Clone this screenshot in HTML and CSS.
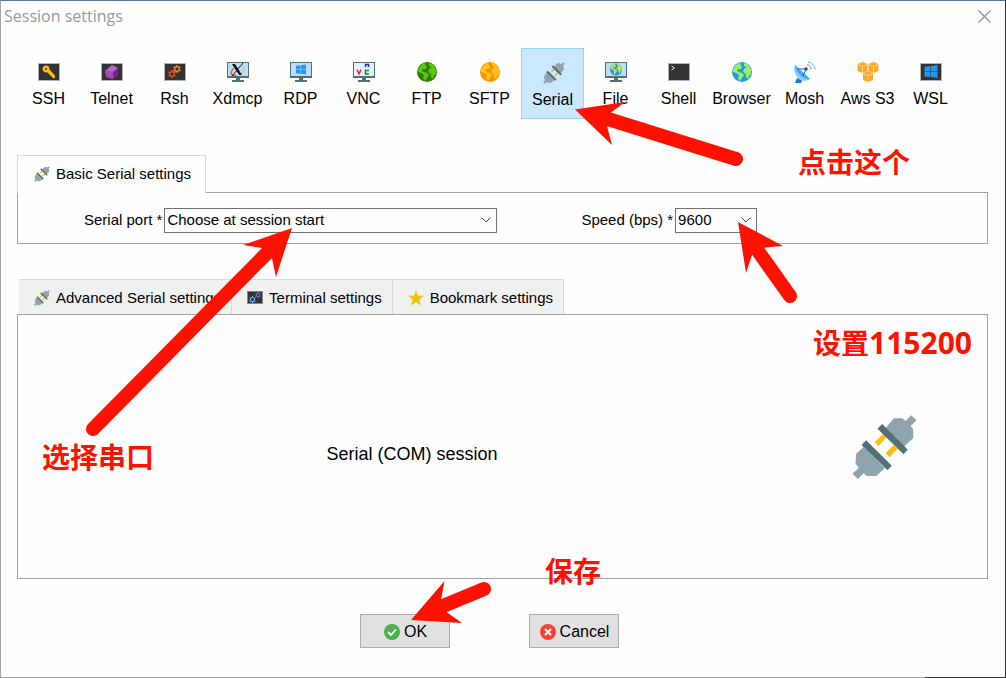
FILE: index.html
```html
<!DOCTYPE html>
<html lang="en">
<head>
<meta charset="utf-8">
<title>Session settings</title>
<link rel="stylesheet" href="styles.css">
</head>
<body>
<svg class="symbols" aria-hidden="true">
  <symbol id="plug" viewBox="38 44 194 192">
    <path fill="#90a4ae" d="M138 84 163 54H188L198 62 215 45 231 60 213 77 221 86V113L190 142ZM72 140 50 160 48 190 58 202 39 220 55 236 72 219 82 227H110L136 204Z"/>
    <path fill="#ffc107" d="M131 101 141 111 117 137 105 125ZM163 134 174 145 150 171 138 159Z"/>
    <path fill="#546e7a" d="M128 71 205 148 192 162 114 85ZM80 120 157 196 144 210 66 134Z"/>
  </symbol>
  <symbol id="terminal" viewBox="0 0 23 24">
    <path fill="#b0b0b0" d="M1 3h22v18H1z"/><path fill="#333" d="M2 4h20v16H2z"/>
  </symbol>
  <symbol id="monitor" viewBox="0 0 23 24">
    <path fill="#546e7a" d="M1 2h22v16h-9v2h4v2H6v-2h4v-2H1z"/><path fill="#bbdefb" d="M2 3h20v13H2z"/>
  </symbol>
  <symbol id="land" viewBox="0 0 20 20">
    <path d="M7 1 4 3 1 7l0 3 3 1 3 2-1 3 2 3 2-3 2-3-2-2-3-1-2-1 1-2 3 0 1-3-2-1 1-1ZM12 1l3 1 2 2 2 4 0 4-2 2-1 3-2-2v-3l-2-1-1-2 2-3 2-1-3-1Z"/>
  </symbol>
  <symbol id="windows" viewBox="0 0 12 12">
    <path fill="#2196f3" d="M0 1.500 5.500 1V5.700H0ZM6 .900 12 0V5.700H6ZM0 6.300H5.500V11L0 10.500ZM6 6.300H12V12L6 11.100Z"/>
  </symbol>
  <symbol id="gear" viewBox="-5 -5 10 10">
    <circle r="3" fill="none" stroke="currentColor" stroke-width="1.5"/>
    <path stroke="currentColor" stroke-width="1.4" d="M0-5v2M0 3v2M-4.4-2.5l1.8 1M2.6 1.5l1.8 1M-4.4 2.5l1.8-1M2.6-1.5l1.8-1"/>
  </symbol>
  <symbol id="cube" viewBox="0 0 11 11">
    <path fill="#ffa726" d="m5.500 0 5 2v7l-5 2-5-2V2z"/><path d="m.5 2.500 5 2 5-2M5.500 4.500V11" fill="none" stroke="#ffe0b2" stroke-width=".8"/>
  </symbol>
</svg>

<main class="dialog">
  <header class="titlebar">
    <h1 class="title">Session settings</h1>
    <button class="close" type="button" aria-label="Close">
      <svg class="close-icon" viewBox="0 0 13 13"><path d="M.5.5l12 12M12.5.5l-12 12" fill="none" stroke="#888" stroke-width="1.1"/></svg>
    </button>
  </header>

  <nav class="toolbar" aria-label="Session type">
    <button class="tool" type="button"><svg class="tool-icon" viewBox="0 0 23 24"><use href="#terminal"/><circle cx="9" cy="9" r="2.200" fill="none" stroke="#ffc107" stroke-width="2.400"/><path d="m9 11 7 7h2v-2.500L12 9" fill="#ffc107"/></svg>SSH</button>
    <button class="tool" type="button"><svg class="tool-icon" viewBox="0 0 23 24"><use href="#terminal"/><path fill="#9c27b0" d="m12 5 6 3v7l-5 4-7-2-1-6z"/><path fill="#ba68c8" d="m12 5 6 3-5 4-8-1z"/><path fill="#ab47bc" d="m5 11 8 1 0 7-7-2z"/><path fill="#7b1fa2" d="m18 8v7l-5 4v-7z"/></svg>Telnet</button>
    <button class="tool" type="button"><svg class="tool-icon" viewBox="0 0 23 24"><use href="#terminal"/><use href="#gear" class="orange" x="10" y="5" width="8" height="8"/><use href="#gear" class="rust" x="5" y="10" width="8" height="8"/></svg>Rsh</button>
    <button class="tool" type="button"><svg class="tool-icon" viewBox="0 0 23 24"><use href="#monitor"/><path d="M8 8c-5 5-3 8 2 7" fill="none" stroke="#ff5722" stroke-width="1.600"/><path d="M16 5c4 3 2 8-3 10" fill="none" stroke="#ffb380" stroke-width="1.200"/><path fill="#111" d="M6 4h3l7 11h-3z"/><path d="M17 3 6 16" stroke="#111"/></svg>Xdmcp</button>
    <button class="tool" type="button"><svg class="tool-icon" viewBox="0 0 23 24"><use href="#monitor"/><use href="#windows" x="7" y="4" width="10" height="11"/></svg>RDP</button>
    <button class="tool" type="button"><svg class="tool-icon" viewBox="0 0 23 24"><use href="#monitor"/><path fill="#e3f2fd" d="M2 3h20v13H2z"/><path d="m5 9.500 2 4.500 2-4.500" fill="none" stroke="#f02020" stroke-width="1.500"/><path d="M13.500 7V4.500h3V7" fill="none" stroke="#2020e8" stroke-width="1.400"/><path d="M17 10.500h-3.500v3.500H17" fill="none" stroke="#00902c" stroke-width="1.500"/></svg>VNC</button>
    <button class="tool" type="button"><svg class="tool-icon" viewBox="0 0 23 24"><circle cx="12" cy="12" r="10" fill="#2e7d00"/><use href="#land" x="2" y="2" width="20" height="20" fill="#5ac70c"/></svg>FTP</button>
    <button class="tool" type="button"><svg class="tool-icon" viewBox="0 0 23 24"><circle cx="12" cy="12" r="10" fill="#ff8f00"/><use href="#land" x="2" y="2" width="20" height="20" fill="#ffc61a"/></svg>SFTP</button>
    <button class="tool selected" type="button" aria-pressed="true"><svg class="tool-icon" viewBox="0 0 23 24"><use href="#plug" x="2" y="1" width="22" height="22"/></svg>Serial</button>
    <button class="tool" type="button"><svg class="tool-icon" viewBox="0 0 23 24"><use href="#monitor"/><circle cx="12" cy="9.500" r="6" fill="#2196f3"/><use href="#land" x="6" y="3" width="12" height="12" fill="#c6e83c"/></svg>File</button>
    <button class="tool" type="button"><svg class="tool-icon" viewBox="0 0 23 24"><use href="#terminal"/><path d="m4.500 6 3 2-3 2" fill="none" stroke="#eee"/></svg>Shell</button>
    <button class="tool" type="button"><svg class="tool-icon" viewBox="0 0 23 24"><circle cx="12" cy="12" r="10" fill="#2196f3"/><use href="#land" x="2" y="2" width="20" height="20" fill="#9cf05a"/></svg>Browser</button>
    <button class="tool" type="button"><svg class="tool-icon" viewBox="0 0 23 24"><path fill="#1976d2" d="m4 18 5 2-1 3H2z"/><path fill="#90caf9" d="M2 5 17 19c-4 3-9 2-12-1S0 9 2 5z"/><path fill="#42a5f5" d="M2 5 17 19c-3 1-7-1-10-4S2 8 2 5z"/><path d="m5 9 8 0-3 7" fill="none" stroke="#1565c0"/><circle cx="13" cy="9" r="1.700" fill="#0d47a1"/><path d="M14 5q4 0 4 4M15 2q6 1 7 7" fill="none" stroke="#42a5f5" stroke-dasharray="3 1"/></svg>Mosh</button>
    <button class="tool" type="button"><svg class="tool-icon" viewBox="0 0 23 24"><use href="#cube" x="1" y="2" width="11" height="11"/><use href="#cube" x="12" y="2" width="11" height="11"/><use href="#cube" x="6" y="11" width="12" height="11"/></svg>Aws S3</button>
    <button class="tool" type="button"><svg class="tool-icon" viewBox="0 0 23 24"><use href="#terminal"/><use href="#windows" x="5" y="5" width="14" height="13"/></svg>WSL</button>
  </nav>

  <section class="group basic">
    <div class="tabs" role="tablist">
      <button class="tab active" type="button" role="tab" aria-selected="true"><svg class="tab-icon"><use href="#plug"/></svg>Basic Serial settings</button>
    </div>
    <div class="panel form">
      <label class="label" for="port">Serial port *</label>
      <select class="select port" id="port"><option>Choose at session start</option></select>
      <label class="label speed-label" for="speed">Speed (bps) *</label>
      <select class="select speed" id="speed"><option>9600</option><option>115200</option></select>
    </div>
  </section>

  <section class="group advanced">
    <div class="tabs lower" role="tablist">
      <button class="tab" type="button" role="tab"><svg class="tab-icon"><use href="#plug"/></svg>Advanced Serial settings</button>
      <button class="tab" type="button" role="tab"><svg class="tab-icon" viewBox="0 0 16 16"><path fill="#888" d="M0 1h16v13H0z"/><path fill="#333" d="M1 2h14v11H1z"/><use href="#gear" class="blue" x="2" y="6" width="7" height="7"/><use href="#gear" class="indigo" x="8" y="2" width="6" height="6"/></svg>Terminal settings</button>
      <button class="tab" type="button" role="tab"><svg class="tab-icon" viewBox="0 0 16 16"><path fill="#f4c20d" d="m8 0 2 5.500 6 .2-4.700 3.800L13 15.500 8 12l-5 3.500 1.700-6L0 5.700l6-.2z"/></svg>Bookmark settings</button>
    </div>
    <div class="panel summary">
      <p class="summary-text">Serial (COM) session</p>
      <svg class="summary-icon"><use href="#plug"/></svg>
    </div>
  </section>

  <footer class="actions">
    <button class="action" type="button"><svg class="action-icon" viewBox="0 0 16 16"><circle cx="8" cy="8" r="8" fill="#4caf50"/><path d="m4 8 3 3 5-5.500" fill="none" stroke="#fff" stroke-width="1.800"/></svg>OK</button>
    <button class="action" type="button"><svg class="action-icon" viewBox="0 0 16 16"><circle cx="8" cy="8" r="8" fill="#f44336"/><path d="m5 5 6 6M11 5l-6 6" stroke="#fff" stroke-width="2"/></svg>Cancel</button>
  </footer>

  <svg class="arrows" viewBox="0 0 1006 678" aria-hidden="true">
    <path class="shaft" d="M736 159 608 119M790 296 758 251M93 429 267 253M484 589 443 606"/>
    <path class="head" d="M575 109.500 625 102 611 112.500 607 126 612 145ZM738 222 783 246 765 247.500 752 255 746 273ZM292 228 243 245 262 248 272 258.500 276 277ZM411 620 444.500 581 441 600 447 612.500 462 623Z"/>
  </svg>
  <p class="note note-click" lang="zh">点击这个</p>
  <p class="note note-speed" lang="zh">设置<span class="digits">115200</span></p>
  <p class="note note-port" lang="zh">选择串口</p>
  <p class="note note-save" lang="zh">保存</p>
</main>
</body>
</html>
```

FILE: styles.css
```css
* { box-sizing: border-box; }

body {
  margin: 0;
  background: #fefefe;
  color: #000;
  font: 15px/18px "Liberation Sans", Arial, sans-serif;
}

button, select { font: inherit; color: inherit; }

.symbols { position: absolute; width: 0; height: 0; }

.dialog {
  position: relative;
  min-height: 100vh;
  padding: 0 17px 29px 16px;
  border: 1px solid #a5a5a5;
  border-top-color: #5b7397;
  border-right-color: #333;
}

.dialog::after {
  content: "";
  position: absolute;
  right: -1px;
  bottom: -1px;
  width: 81px;
  height: 1px;
  background: #333;
}

.titlebar {
  display: flex;
  align-items: center;
  justify-content: space-between;
  height: 30px;
  margin: 0 -4px 0 -13px;
}

.title {
  margin: 0;
  color: #999;
  font: 16px/22px "Open Sans", "Noto Sans", sans-serif;
}

.close {
  display: flex;
  padding: 1px;
  border: 0;
  background: none;
}

.close-icon { width: 13px; height: 13px; }

.toolbar { display: flex; padding-top: 17px; }

.tool {
  display: flex;
  flex: 0 1 63px;
  flex-direction: column;
  align-items: center;
  gap: 6px;
  min-width: 0;
  height: 71px;
  padding: 11px 0 0;
  border: 1px solid transparent;
  background: none;
  font-size: 16px;
  white-space: nowrap;
}

.tool.selected {
  padding-top: 12px;
  border-color: #99d1ff;
  background: #cce8ff;
}

.tool-icon { flex: none; width: 23px; height: 24px; overflow: visible; }

.orange { color: #ff9800; }
.rust { color: #f4511e; }
.blue { color: #64b5f6; }
.indigo { color: #6f7fe0; }

.basic { margin-top: 36px; }
.advanced { margin-top: 35px; }

.tabs { display: flex; position: relative; }
.tabs.lower { padding-left: 2px; }

.tab {
  display: flex;
  align-items: center;
  gap: 6px;
  height: 35px;
  padding: 2px 10px 0 15px;
  border: solid #d9d9d9;
  border-width: 1px 1px 0 0;
  background: #f0f0f0;
  white-space: nowrap;
}

.tab.active {
  height: 38px;
  margin-bottom: -1px;
  padding: 0 14px 2px 16px;
  border-left-width: 1px;
  background: #fefefe;
}

.tab-icon { width: 16px; height: 16px; }

.panel { border: 1px solid #a0a0a0; }

.form {
  display: flex;
  align-items: center;
  height: 52px;
  padding: 4px 66px 0 66px;
}

.label { margin-right: 2px; white-space: nowrap; }
.speed-label { margin-left: 84px; }

.select {
  height: 25px;
  padding: 0 20px 0 2px;
  border: 1px solid #707070;
  border-radius: 0;
  appearance: none;
  background: #fefefe url("data:image/svg+xml,%3Csvg xmlns='http://www.w3.org/2000/svg' width='10' height='6'%3E%3Cpath d='M.5.5 5 5 9.500.5' fill='none' stroke='%23444'/%3E%3C/svg%3E") no-repeat right 5px center;
}

.port { flex: 0 1 333px; min-width: 0; }
.speed { width: 82px; }

.summary {
  display: flex;
  align-items: center;
  gap: 46px;
  height: 265px;
  padding-right: 70px;
}

.summary-text {
  flex: 1;
  margin: 0;
  padding-top: 14px;
  font-size: 18px;
  line-height: 22px;
  text-align: center;
}

.summary-icon { width: 65px; height: 64px; }

.actions {
  display: flex;
  justify-content: center;
  gap: 79px;
  margin-top: 35px;
  padding-right: 26px;
}

.action {
  display: flex;
  align-items: center;
  justify-content: center;
  gap: 4px;
  width: 90px;
  height: 34px;
  padding: 1px 0 0 1px;
  border: 1px solid #adadad;
  background: #e1e1e1;
  font-size: 16px;
}

.action-icon { width: 16px; height: 16px; }

.arrows {
  position: absolute;
  top: -1px;
  left: -1px;
  width: 1006px;
  height: 678px;
  pointer-events: none;
}

.shaft { fill: none; stroke: #ff1100; stroke-width: 14; stroke-linecap: round; }
.head { fill: #ff1100; }

.note {
  position: absolute;
  margin: 0;
  color: #ff1100;
  font: bold 28px/36px "Noto Sans CJK SC", sans-serif;
  white-space: nowrap;
}

.digits { font-family: "Open Sans", sans-serif; font-size: 30px; }

.note-click { top: 142px; left: 797px; }
.note-speed { top: 323px; left: 812px; }
.note-port { top: 437px; left: 41px; }
.note-save { top: 551px; left: 544px; }
```
